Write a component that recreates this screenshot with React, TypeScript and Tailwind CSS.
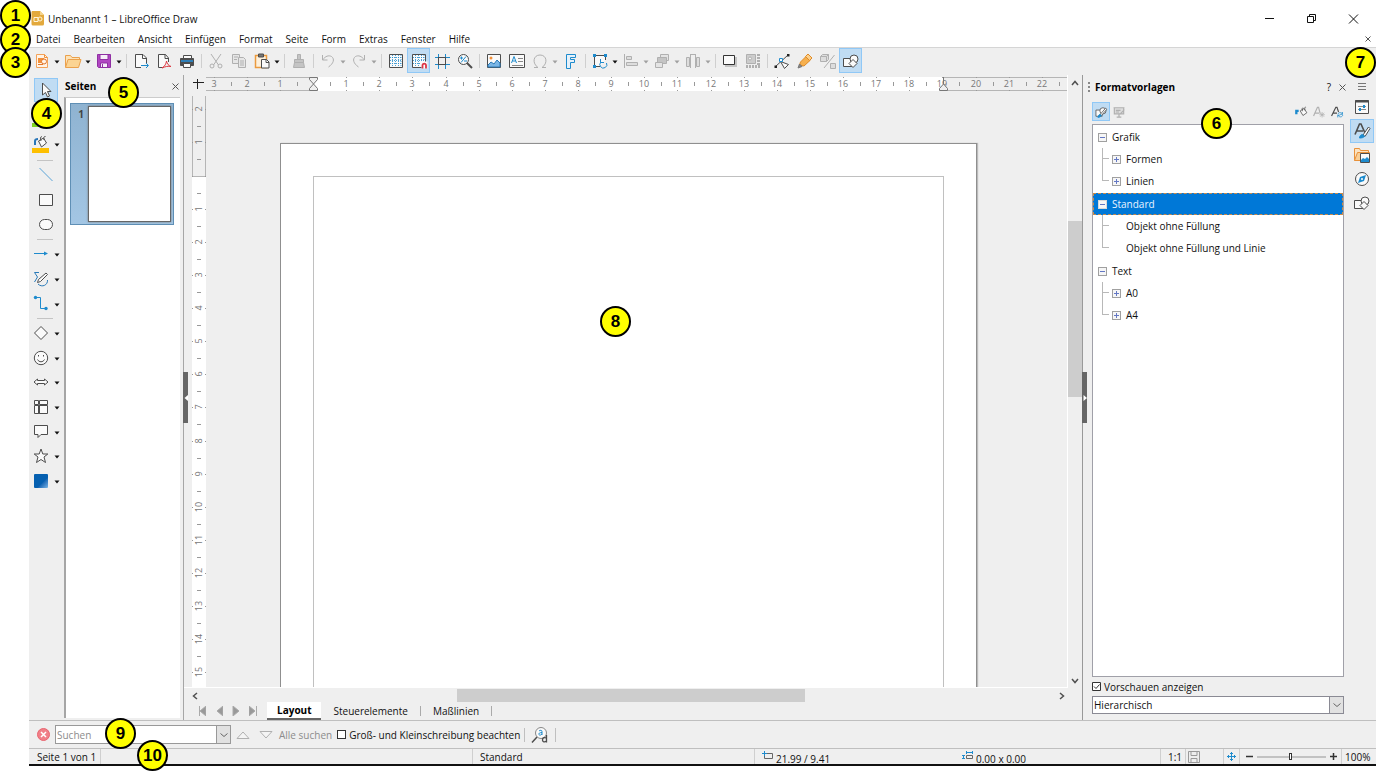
import React from "react";

type Kids = { children?: React.ReactNode };

const Svg = ({ children, size = 18 }: Kids & { size?: number }) => (
  <svg width={size} height={size} viewBox="0 0 18 18" fill="none" stroke="#4d4d4d" strokeWidth="1" aria-hidden="true" className="shrink-0">
    {children}
  </svg>
);

const G = "#b0b0b0";
const B = "#1e8bcd";
const F = "#fafafa";

const icons: Record<string, React.ReactNode> = {
  newDoc: (
    <>
      <path d="M3.5 2.5h8l3 3v10h-11z" fill="#fff3e6" stroke="#f2a25a" />
      <path d="M11.5 2.5v3h3" stroke="#f2903a" />
      <path d="M5 6h6v5H5z" fill="#f2903a" stroke="none" />
      <circle cx="11" cy="9.5" r="2.5" fill="#fff3e6" stroke="#e2762a" />
      <path d="M5 12.5h5" stroke="#e2762a" />
    </>
  ),
  folder: (
    <>
      <path d="M1.5 15V3.5h5l1.5 2h7.5v3" fill="#fde3b8" stroke="#eba14c" />
      <path d="M1.5 15.5l2.5-8h13l-2.5 8z" fill="#fbd493" stroke="#eba14c" />
    </>
  ),
  save: (
    <>
      <path d="M2.5 2.5h13v13h-12l-1-1z" fill="#b146c2" stroke="#8f2fa3" />
      <path d="M5 2.5h8v5H5z" fill="#f7eef9" stroke="#8f2fa3" />
      <path d="M5.5 11h7v4.5h-7z" fill="#f7eef9" stroke="#8f2fa3" />
      <path d="M7.5 12v3" stroke="#8f2fa3" />
    </>
  ),
  exportDoc: (
    <>
      <path d="M14.5 10V6L11 2.5H3.5v13H9" fill={F} />
      <path d="M14.5 11V6.5h-4v-4" />
      <path d="M9 13.5h7M14 11l2.5 2.5L14 16" stroke={B} />
    </>
  ),
  pdf: (
    <>
      <path d="M8 15.5H3.5v-13h7L13.5 6v4" fill={F} />
      <path d="M10 2.5v4h3.5" />
      <path d="M7 16c3-2 4-4 4.5-7 .5 3 2 4.5 4.5 5.5-3-.5-6 0-9 1.5z" stroke="#dd3b44" />
    </>
  ),
  printer: (
    <>
      <path d="M5.5 6V3.5h8V6" fill={F} />
      <path d="M2.5 6.5h13v7h-13z" fill="#4d4d4d" />
      <path d="M3 8h12v2H3z" fill="#2f7fb8" stroke="none" />
      <path d="M5.5 11.5h7v4h-7z" fill={F} />
    </>
  ),
  cut: (
    <g stroke={G}>
      <path d="M4 2l7.5 11M14 2L6.5 13" />
      <circle cx="5" cy="14" r="2" />
      <circle cx="13" cy="14" r="2" />
    </g>
  ),
  copy: (
    <g stroke={G} fill="#e6e6e6">
      <path d="M2.5 2.5h7v9h-7z" />
      <path d="M8.5 5.5h5l2 2v8h-7z" />
      <path d="M4 5h4M4 7.5h3M10 9h4M10 11h4M10 13h4" />
    </g>
  ),
  paste: (
    <>
      <path d="M2.5 3.5h11v12h-11z" fill="#fdf0dc" stroke="#eb9a3e" strokeWidth="1.5" />
      <path d="M5.5 2h5v3h-5z" fill="#777" />
      <path d="M8.5 7.5h5l2.5 2.5v6H8.5z" fill={F} />
      <path d="M13 7.5v3h3" />
    </>
  ),
  brush: (
    <g stroke={G} fill="#c4c4c4">
      <path d="M7.5 2.5h3v5h-3zM4.5 7.5h9v3h-9zM4.5 10.5l-1 5h11l-1-5z" />
    </g>
  ),
  undo: (
    <g stroke={G}>
      <path d="M3.5 3v5h5M3.5 8c3-4 6-5 9-3.5 3.5 2.5 2 7-3 10.5" />
    </g>
  ),
  redo: (
    <g stroke={G}>
      <path d="M14.5 3v5h-5M14.5 8c-3-4-6-5-9-3.5-3.5 2.5-2 7 3 10.5" />
    </g>
  ),
  grid: (
    <>
      <path d="M2.5 2.5h13v13h-13z" fill={F} />
      <path d="M5.5 3v12M8.5 3v12M11.5 3v12M14 3v12M3 5.5h12M3 8.5h12M3 11.5h12" stroke={B} strokeDasharray="1 1" opacity=".8" />
    </>
  ),
  gridSnap: (
    <>
      <path d="M2.5 2.5h13v13h-13z" fill={F} />
      <path d="M5.5 3v12M8.5 3v12M11.5 3v6M14 3v6M3 5.5h12M3 8.5h12M3 11.5h8" stroke={B} strokeDasharray="1 1" opacity=".8" />
      <path d="M11.5 9.5h6v7h-6z" fill={F} stroke="none" />
      <path d="M12.5 16.5v-3.5a1.8 1.8 0 013.5 0v3.5" stroke="#dc3545" strokeWidth="1.8" />
    </>
  ),
  helplines: (
    <>
      <path d="M2 5.5h14M2 12.5h14M5.5 5v8M12.5 5v8" />
      <path d="M5.5 2v3M12.5 2v3M5.5 13v4M12.5 13v4M2 5.5h3M13 5.5h4M2 12.5h3M13 12.5h4" stroke={B} />
    </>
  ),
  zoomPan: (
    <>
      <circle cx="7.5" cy="7.5" r="5" fill={F} />
      <path d="M11 11l5 5" strokeWidth="2" />
      <path d="M4 6h3M5.5 4.5v3M8 9h3M5 10.5l5-6" stroke={B} />
    </>
  ),
  image: (
    <>
      <path d="M2.5 2.5h13v13h-13z" fill={F} />
      <circle cx="6" cy="6" r="1.5" fill="#f2903a" stroke="none" />
      <path d="M3 15v-2l3-3 3 2 3-4 3 3v4z" fill="#7ab6e6" stroke="#2a7ab8" />
    </>
  ),
  textbox: (
    <>
      <path d="M1.5 2.5h15v13h-15z" fill={F} />
      <path d="M3.5 11L6 4.5 8.5 11M4.5 9h3" stroke={B} />
      <path d="M10 6.5h5M10 9.5h5M4 13.5h11" stroke="#888" />
    </>
  ),
  omega: <path d="M3 15.5h4c-6-4-5-12.5 2-12.5s8 8.5 2 12.5h4" stroke={G} />,
  fontwork: <path d="M4.5 2.5h9v3H8.5v2h4v3h-4v6h-4z" fill="#e6f1fa" stroke={B} />,
  transform: (
    <>
      <path d="M9 14.5H3.5v-11h11V8" fill={F} />
      <path d="M2 2h3v3H2zM13 2h3v3h-3zM2 13h3v3H2z" fill={B} stroke="none" />
      <path d="M10 10a3.5 3.5 0 105.5 1M9.5 7v3.5H13" stroke={B} />
    </>
  ),
  align: (
    <g stroke={G} fill="#ddd">
      <path d="M2.5 2v14M4.5 4.5h5v3h-5zM4.5 10.5h11v3h-11z" />
    </g>
  ),
  arrange: (
    <g stroke={G} fill="#e4e4e4">
      <path d="M7.5 2.5h8v6h-8z" />
      <path d="M4.5 5.5h9v6h-9z" fill="#c4c4c4" />
      <path d="M2.5 10.5h7v5h-7z" />
    </g>
  ),
  distribute: (
    <g stroke={G} fill="#ddd">
      <path d="M2.5 5.5h3v9h-3zM12.5 5.5h3v9h-3zM6.5 2.5h5M6.5 2v14M11.5 2v14" />
    </g>
  ),
  shadow: (
    <>
      <path d="M4 5h12v10H4z" fill="#c4c4c4" stroke="none" />
      <path d="M2.5 3.5h11v9h-11z" fill={F} stroke="#333" />
    </>
  ),
  crop: (
    <g stroke={G}>
      <path d="M2.5 2.5h9v9h-9z" fill="#ccc" />
      <circle cx="6" cy="6.5" r="1.5" fill="#f4f4f4" />
      <path d="M2 14.5h14M14.5 2v12" strokeDasharray="2 1" strokeWidth="3" />
    </g>
  ),
  points: (
    <>
      <path d="M2 15L15 3M7.5 9.5l8 3-4 4z" fill={F} />
      <path d="M14 2h2.5v2.5H14zM1.5 13.5H4V16H1.5z" fill="#222" stroke="none" />
      <path d="M6.5 6.5h3v3h-3z" fill={F} stroke={B} />
    </>
  ),
  glue: (
    <>
      <path d="M3.5 13l1-3 6-6 4 4-6.5 6z" fill="#f6b04e" stroke="#e08a25" />
      <path d="M9.5 4.5L12 2l4 4-2.5 2.5z" fill="#fbd08c" stroke="#e08a25" />
      <path d="M2 16l1.5-4L6 14.5z" fill="#888" stroke="#777" />
    </>
  ),
  extrude: (
    <g stroke={G} fill="#ddd">
      <path d="M1.5 4.5l2-2h6v5l-2 2h-6zM1.5 4.5h6v5M7.5 4.5l2-2M11.5 11.5h5v5h-5zM15.5 3L5 16" />
    </g>
  ),
  shapes: (
    <g fill={F}>
      <path d="M1.5 6.5h9v8h-9z" />
      <circle cx="12" cy="7" r="4" />
      <path d="M11 7.5l4 4-4 4-4-4z" />
    </g>
  ),
  pointer: <path d="M5.5 2v12l3-2.5 2 4.5 2-1-2-4.5H14z" fill={F} />,
  lineColor: (
    <>
      <path d="M5 11L13 2" stroke={B} />
      <path d="M0 13h17v4H0z" fill="#7fd321" stroke="none" />
    </>
  ),
  fillColor: (
    <>
      <path d="M0 13h17v5H0z" fill="#fdbf00" stroke="none" />
      <path d="M6.5 6l5-3 3 5-5 4z" fill={F} />
      <path d="M9 6c-1-3-.5-5 1-4M12 5c-.5-2 0-4 1.5-3.5" />
      <path d="M3 10V6C3 4.5 4 4 6 4" stroke="#2a76b8" strokeWidth="2" />
    </>
  ),
  line: <path d="M2.5 2l13 13" stroke="#5aa4d8" />,
  rect: <path d="M2.5 3.5h13v11h-13z" fill={F} />,
  ellipse: <rect x="2.5" y="3.5" width="13" height="10" rx="5" fill={F} />,
  arrow: (
    <>
      <path d="M2 8.5h13" stroke={B} />
      <path d="M12 6.5l4 2-4 2z" fill={B} stroke="none" />
    </>
  ),
  curve: (
    <>
      <path d="M7 2.5H2.5l3 4.5-3 5M6 14c4 4 10 1 9.5-4" stroke="#2a7ab8" />
      <path d="M5.5 12.5l1-3L14 3l1.5 1.5-7 7z" fill={F} />
    </>
  ),
  connector: (
    <>
      <path d="M3.5 2.5h5v11h5" stroke={B} />
      <circle cx="3.5" cy="2.5" r="1.7" fill={B} stroke="none" />
      <circle cx="14" cy="13.5" r="1.7" fill={B} stroke="none" />
    </>
  ),
  diamond: <path d="M9 2.5l6.5 6.5L9 15.5 2.5 9z" fill={F} />,
  smiley: (
    <>
      <circle cx="9" cy="9" r="6.7" fill={F} />
      <path d="M5.5 10.5c1.5 3 5.5 3 7 0M6.5 6v1.5M11.5 6v1.5" />
    </>
  ),
  dblArrow: <path d="M2 9l3.5-3v1.5h7V6L16 9l-3.5 3v-1.5h-7V12z" fill={F} />,
  flow: (
    <>
      <path d="M2.5 2.5h4v4h-4zM7.5 2.5h8v4h-8zM2.5 7.5h4v8h-4zM7.5 7.5h8v8h-8z" fill={F} />
      <path d="M7 7v9" strokeWidth="1.5" />
    </>
  ),
  callout: <path d="M2.5 2.5h13v9H9l-3 3v-3H2.5z" fill={F} />,
  star: <path d="M9 2l1.8 5h5L12 10l1.5 5.5L9 12.5l-4.5 3L6 10 2.2 7h5z" fill={F} />,
  findReplace: (
    <>
      <circle cx="10" cy="7" r="5.5" fill={F} stroke="#888" />
      <path d="M6 11l-5 5.5" strokeWidth="1.5" />
      <path d="M8 5c1-1 3-1 3 .5V9M11 6.5c-4 0-4 3-1.5 2.5L11 8" stroke={B} />
      <path d="M15.5 9v7.5M15.5 12c-3-1-4 0-4 2s2 2.5 4 1" strokeWidth="1.3" />
    </>
  ),
  shapeStyle: (
    <>
      <path d="M2.5 6.5h8v8h-8z" fill={F} />
      <circle cx="11.5" cy="7.5" r="4" fill={F} />
      <path d="M8 12l7-8 1.5 1.5-7 8z" fill={F} />
      <path d="M5 16c0-2 1.5-4 3-4l1.5 1.5C9 15 7 16 5 16z" fill={B} stroke={B} />
    </>
  ),
  presStyle: (
    <g stroke={G} fill="#ddd">
      <path d="M2 3.5h14M3 4v7.5h12V4M5 7h6M5 9h4M9 12v3M6 15.5h6M10 12l6-6" strokeWidth="1.5" />
    </g>
  ),
  fillFormat: (
    <>
      <path d="M3 12V7.5h3" stroke={B} strokeWidth="3" />
      <path d="M8 7.5l5-3 3.5 5.5-5 3.5z" fill={F} />
      <path d="M11 8c-1-3-.5-5 1-4M14 7c-.5-3 0-5 1.5-4" />
    </>
  ),
  newStyle: (
    <g stroke={G}>
      <path d="M2 14L7 3h1.5l2 8M4 10.5h5" strokeWidth="1.5" />
      <path d="M13 9v7M9.5 12.5h7M10.5 10l5 5M15.5 10l-5 5" />
    </g>
  ),
  updateStyle: (
    <>
      <path d="M2 14L7.5 3H9l2 6M4 10.5h5" strokeWidth="1.5" />
      <path d="M10 12c1-3 5-3 6 0M16.5 13c-1 3-5 3-6 0M16 9v3h-3M10 16v-3h3" stroke={B} />
    </>
  ),
  properties: (
    <>
      <path d="M2.5 2.5h13v13h-13z" fill={F} />
      <path d="M2 3.5h14" strokeWidth="2" />
      <path d="M5 8.5h8M5 11.5h8" stroke="#888" />
      <path d="M11 7v3M7 10v3" stroke={B} strokeWidth="2" />
    </>
  ),
  styles: (
    <>
      <path d="M2 12.5L6.5 2H8l4 9M4 9h6" strokeWidth="1.6" />
      <path d="M10 13l5.5-8 1.5 1.5-5 8z" fill={F} />
      <path d="M6.5 16c0-2 1.5-3.5 3-3.5l2 1.5c-.5 1.5-2.5 2-5 2z" fill={B} stroke={B} />
    </>
  ),
  gallery: (
    <>
      <path d="M1.5 14.5v-12h5l1 2h8v2" fill="#fbe3c2" stroke="#e8913a" />
      <path d="M1.5 14.5l3-8h12v8z" fill="#f9cf97" stroke="#e8913a" />
      <path d="M7.5 7.5h9v9h-9z" fill={F} />
      <path d="M8 16v-2l2-2 2 1 2-2 2 2v3z" fill={B} stroke="none" />
    </>
  ),
  navigator: (
    <>
      <circle cx="9" cy="9" r="6.5" fill={F} />
      <path d="M13 5l-2 6-6 2 2-6z" fill={B} stroke="none" />
      <circle cx="9" cy="9" r="1" fill="#fff" stroke="none" />
    </>
  ),
};

const Icon = ({ name, size }: { name: string; size?: number }) => <Svg size={size}>{icons[name]}</Svg>;

const Caret = ({ off }: { off?: boolean }) => (
  <svg width="6" height="4" viewBox="0 0 6 4" aria-hidden="true" className="shrink-0">
    <path d="M0.5 0.5h5L3 3.5z" fill={off ? "#a0a0a0" : "#111"} />
  </svg>
);

const Sep = () => <span className="mx-auto h-3.5 w-px bg-[#cfcfcf]" />;

type Tool = { icon?: string; label?: string; menu?: boolean; off?: boolean; on?: boolean };

const toolbar: Tool[] = [
  { icon: "newDoc", label: "Neu", menu: true },
  { icon: "folder", label: "Öffnen", menu: true },
  { icon: "save", label: "Speichern", menu: true },
  {},
  { icon: "exportDoc", label: "Exportieren" },
  { icon: "pdf", label: "Als PDF exportieren" },
  { icon: "printer", label: "Drucken" },
  {},
  { icon: "cut", label: "Ausschneiden" },
  { icon: "copy", label: "Kopieren" },
  { icon: "paste", label: "Einfügen", menu: true },
  {},
  { icon: "brush", label: "Format übertragen" },
  {},
  { icon: "undo", label: "Rückgängig", menu: true, off: true },
  { icon: "redo", label: "Wiederherstellen", menu: true, off: true },
  {},
  { icon: "grid", label: "Raster anzeigen" },
  { icon: "gridSnap", label: "Am Raster fangen", on: true },
  { icon: "helplines", label: "Hilfslinien" },
  { icon: "zoomPan", label: "Zoom" },
  {},
  { icon: "image", label: "Bild" },
  { icon: "textbox", label: "Textfeld" },
  { icon: "omega", label: "Sonderzeichen", menu: true, off: true },
  { icon: "fontwork", label: "Fontwork" },
  {},
  { icon: "transform", label: "Transformationen", menu: true },
  { icon: "align", label: "Ausrichten", menu: true, off: true },
  { icon: "arrange", label: "Anordnen", menu: true, off: true },
  { icon: "distribute", label: "Verteilen", menu: true, off: true },
  {},
  { icon: "shadow", label: "Schatten" },
  { icon: "crop", label: "Zuschneiden" },
  {},
  { icon: "points", label: "Punkte" },
  { icon: "glue", label: "Klebepunkte" },
  { icon: "extrude", label: "Extrusion" },
  { icon: "shapes", label: "Zeichenfunktionen", on: true },
];

const Badge = ({ n, place }: { n: number; place: string }) => (
  <span
    className={
      "absolute z-20 flex size-[31px] items-center justify-center rounded-full border-2 border-black bg-[#ffff00] font-['Liberation_Sans',sans-serif] text-[17px] leading-none font-bold text-black " +
      place
    }
  >
    {n}
  </span>
);

const CM = 33.13;

const HRuler = () => (
  <svg width="861" height="15" className="block text-[9px]" fill="#777">
    <rect x="0" y="0" width="861" height="14" fill="#efefef" />
    <path d="M0 0.5H861M0 13.5H861" stroke="#b5b5b5" />
    <rect x="107" y="0" width="630" height="14" fill="#fff" />
    {Array.from({ length: 26 }, (_, i) => i - 3).map((n) => {
      const x = Math.round(107 + n * CM);
      return (
        <g key={n}>
          {n !== 0 && (
            <text x={x} y="10" textAnchor="middle">
              {Math.abs(n)}
            </text>
          )}
          <path d={`M${x + 17}.5 5v4M${x}.5 0v1M${x}.5 13v1`} stroke="#999" />
        </g>
      );
    })}
    <path d="M103.5 .5h8v2l-4 4.5-4-4.5zM103.5 13.5h8v-2L107.5 7l-4 4.5z" fill="#efefef" stroke="#777" />
    <path d="M733.5 13.5h8v-2L737.5 7l-4 4.5zM737.5 0v7" fill="#efefef" stroke="#777" />
  </svg>
);

const VRuler = () => (
  <svg width="14" height="592" className="block text-[9px]" fill="#777">
    <rect width="14" height="592" fill="#fff" />
    <path d="M.5 0v80.5h13V0" fill="#efefef" stroke="#b5b5b5" />
    {Array.from({ length: 18 }, (_, i) => i - 2).map((n) => {
      const y = Math.round(79.5 + n * CM);
      return (
        <g key={n}>
          {n !== 0 && (
            <text transform={`translate(10 ${y}) rotate(-90)`} textAnchor="middle">
              {Math.abs(n)}
            </text>
          )}
          <path d={`M5 ${y + 17}.5h4M0 ${y}.5h1M13 ${y}.5h1`} stroke="#999" />
        </g>
      );
    })}
  </svg>
);

const Chevron = ({ d }: { d: string }) => (
  <svg width="8" height="8" viewBox="0 0 8 8" fill="none" stroke="#505050" strokeWidth="1.5" aria-hidden="true">
    <path d={d} />
  </svg>
);

const SmallChevron = () => (
  <svg width="8" height="8" viewBox="0 0 8 8" fill="none" stroke="#666" aria-hidden="true">
    <path d="M.5 2.5L4 5.5l3.5-3" />
  </svg>
);

const SideTool = ({ icon, label, menu, on }: Tool) => (
  <div className={"flex min-h-0 flex-1 items-center " + (menu ? "pl-[3px]" : on ? "pl-[5px]" : "pl-2")}>
    <button aria-label={label} className={"flex items-center justify-center " + (on ? "size-6 border border-[#90c8f6] bg-[#c0dcf3]" : "")}>
      <Icon name={icon!} />
    </button>
    {menu && (
      <span className="ml-1 pt-0.5">
        <Caret />
      </span>
    )}
  </div>
);

const SideSep = () => <span className="my-0.5 ml-2 h-px w-4 shrink-0 bg-[#c4c4c4]" />;

const Box = ({ open, sel }: { open?: boolean; sel?: boolean }) => (
  <svg width="9" height="9" viewBox="0 0 9 9" className="shrink-0" aria-hidden="true">
    <rect x=".5" y=".5" width="8" height="8" fill="#f6f6f6" stroke={sel ? "#d8d8d8" : "#a0a0a0"} />
    <path d={open ? "M2 4.5h5" : "M2 4.5h5M4.5 2v5"} stroke="#6478c4" />
  </svg>
);

const tree = [
  { name: "Grafik", items: ["Formen", "Linien"], leaf: false },
  { name: "Standard", items: ["Objekt ohne Füllung", "Objekt ohne Füllung und Linie"], leaf: true },
  { name: "Text", items: ["A0", "A4"], leaf: false },
];

const VSep = () => <span className="w-px shrink-0 self-stretch bg-[#cfcfcf]" />;

export default function App() {
  return (
    <div className="relative flex h-screen flex-col overflow-hidden bg-white pb-[5px] pl-[29px] font-['Open_Sans','Noto_Sans',sans-serif] text-[10px] leading-4 whitespace-nowrap text-[#111]">
      <header className="flex h-[29px] shrink-0 items-center pt-2 pl-0.5">
        <svg width="14" height="15" viewBox="0 0 14 15" aria-hidden="true">
          <path d="M1 0h8l4 4v9a1.5 1.5 0 01-1.5 1.5H2A1.5 1.5 0 01.5 13V1z" fill="#e3a93c" />
          <path d="M9 0l4 4H9z" fill="#f5d48c" />
          <path d="M3 6.5h4v4H3z" fill="none" stroke="#fff3d6" />
          <circle cx="9" cy="8" r="2" fill="none" stroke="#fff3d6" />
        </svg>
        <h1 className="ml-[3px]">Unbenannt 1 – LibreOffice Draw</h1>
        <div className="mr-[17px] ml-auto flex items-center gap-8">
          <button aria-label="Minimieren">
            <svg width="10" height="10" viewBox="0 0 10 10" stroke="#111">
              <path d="M0 4.5h9" />
            </svg>
          </button>
          <button aria-label="Wiederherstellen">
            <svg width="9" height="10" viewBox="0 0 9 10" fill="none" stroke="#111">
              <path d="M.5 2.5h6v6h-6zM2.5 2V.5h6v6H7" />
            </svg>
          </button>
          <button aria-label="Schließen">
            <svg width="11" height="10" viewBox="0 0 11 10" stroke="#111">
              <path d="M1 .5l9 9M10 .5l-9 9" />
            </svg>
          </button>
        </div>
      </header>

      <nav className="flex h-[19px] shrink-0 items-center gap-[13px] border-b border-[#d5d5d5] pt-0.5 pl-[7px]">
        {["Datei", "Bearbeiten", "Ansicht", "Einfügen", "Format", "Seite", "Form", "Extras", "Fenster", "Hilfe"].map((m) => (
          <button key={m}>{m}</button>
        ))}
        <button aria-label="Dokument schließen" className="mr-[5px] ml-auto flex">
          <svg width="6" height="6" viewBox="0 0 6 6" stroke="#555">
            <path d="M.5 .5l5 5M5.5 .5l-5 5" />
          </svg>
        </button>
      </nav>

      <div className="flex h-[27px] shrink-0 items-center bg-[#efefef] pb-0.5 pl-px">
        {toolbar.map((t, i) =>
          t.icon ? (
            <button
              key={i}
              aria-label={t.label}
              className={"flex h-[25px] shrink-0 items-center justify-center " + (t.on ? "border border-[#90c8f6] bg-[#c0dcf3]" : "") + (t.menu ? " w-[31px]" : " w-[23px]")}
            >
              <span className="flex w-[23px] shrink-0 items-center justify-center">
                <Icon name={t.icon} />
              </span>
              {t.menu && (
                <span className="flex w-2 justify-center pt-0.5">
                  <Caret off={t.off} />
                </span>
              )}
            </button>
          ) : (
            <span key={i} className="flex w-1.5 shrink-0">
              <Sep />
            </span>
          ),
        )}
      </div>

      <main className="flex min-h-0 flex-1 bg-[#efefef]">
        <div className="flex w-[35px] shrink-0 flex-col pt-[3px]">
          <div className="flex h-6 shrink-0">
            <SideTool icon="pointer" label="Auswählen" on />
          </div>
          <div className="mt-1 mb-0.5 flex h-[50px] shrink-0 flex-col">
            <SideTool icon="lineColor" label="Linienfarbe" menu />
            <SideTool icon="fillColor" label="Füllfarbe" menu />
          </div>
          <SideSep />
          <div className="flex h-[74px] shrink-0 flex-col">
            <SideTool icon="line" label="Linie" />
            <SideTool icon="rect" label="Rechteck" />
            <SideTool icon="ellipse" label="Ellipse" />
          </div>
          <SideSep />
          <div className="flex h-[74px] shrink-0 flex-col">
            <SideTool icon="arrow" label="Pfeil" menu />
            <SideTool icon="curve" label="Kurve" menu />
            <SideTool icon="connector" label="Verbinder" menu />
          </div>
          <SideSep />
          <div className="flex h-[172px] shrink-0 flex-col">
            <SideTool icon="diamond" label="Standardformen" menu />
            <SideTool icon="smiley" label="Symbolformen" menu />
            <SideTool icon="dblArrow" label="Blockpfeile" menu />
            <SideTool icon="flow" label="Flussdiagramm" menu />
            <SideTool icon="callout" label="Legenden" menu />
            <SideTool icon="star" label="Sterne" menu />
            <div className="flex min-h-0 flex-1 items-center pl-[5px]">
              <button aria-label="3D-Objekte" className="size-3.5 rounded-[1px] bg-linear-to-br from-[#0560b0] from-60% to-[#7ab6e6]" />
              <span className="ml-1.5 pt-0.5">
                <Caret />
              </span>
            </div>
          </div>
        </div>

        <aside className="relative flex w-[120px] shrink-0 flex-col border-r border-[#a6a6a6] pr-[3px]">
          <div className="flex h-[22px] items-center justify-between pr-px pl-px">
            <h2 className="font-bold text-black">Seiten</h2>
            <button aria-label="Seitenbereich schließen" className="flex">
              <svg width="7" height="7" viewBox="0 0 7 7" stroke="#555">
                <path d="M.5 .5l6 6M6.5 .5l-6 6" />
              </svg>
            </button>
          </div>
          <div className="mb-0.5 flex-1 border-t border-l-2 border-t-[#ccc] border-l-[#a6a6a6] bg-white pt-[5px] pl-1">
            <div className="flex h-[122px] w-[104px] border border-[#5f8fb5] bg-linear-to-b from-[#8fb3d1] to-[#a3c6e4] pt-0.5 pb-0.5">
              <span className="w-[17px] pr-1 text-right font-bold text-[#444]">1</span>
              <span className="w-[83px] border border-[#666] bg-white shadow-[0_0_2px_#777]" />
            </div>
          </div>
          <button aria-label="Seitenbereich einklappen" className="absolute top-[297px] -right-[5px] z-10 flex h-[51px] w-[5px] items-center justify-center bg-[#666]">
            <svg width="4" height="6" viewBox="0 0 4 6">
              <path d="M4 0v6L.5 3z" fill="#fff" />
            </svg>
          </button>
        </aside>

        <section className="flex min-w-0 flex-1 flex-col">
          <div className="flex min-h-0 flex-1">
            <div className="flex min-w-0 flex-1 flex-col border-r border-b border-white pl-2">
              <div className="flex h-[21px] shrink-0 overflow-hidden pt-0.5">
                <svg width="14" height="14" viewBox="0 0 14 14" fill="none" stroke="#222" className="shrink-0">
                  <path d="M1 5.5h11M5.5 2v10" />
                </svg>
                <HRuler />
              </div>
              <div className="flex min-h-0 flex-1">
                <div className="w-3.5 shrink-0 overflow-hidden">
                  <VRuler />
                </div>
                <div className="relative min-w-0 flex-1 overflow-hidden pt-[47px] pl-[74px]">
                  <div className="h-[990px] w-[697px] border border-[#8f8f8f] bg-white p-8 shadow-[1px_0_1px_#bbb]">
                    <div className="h-full border border-[#c0c0c0]" />
                  </div>
                  <Badge n={8} place="top-[210px] left-[394px]" />
                </div>
              </div>
            </div>
            <div className="flex w-[14px] shrink-0 flex-col items-center">
              <button aria-label="Nach oben" className="flex h-4 items-center">
                <Chevron d="M1 6l3-3.5L7 6" />
              </button>
              <div className="flex w-full flex-1 flex-col">
                <span className="grow-[130]" />
                <span className="grow-[176] bg-[#cdcdcd]" />
                <span className="grow-[277]" />
              </div>
              <button aria-label="Nach unten" className="flex h-3.5 items-center">
                <Chevron d="M1 2l3 3.5L7 2" />
              </button>
            </div>
          </div>
          <div className="mt-px mr-4 flex h-[13px] shrink-0 items-center pl-[7px]">
            <button aria-label="Nach links">
              <Chevron d="M6 1L2.5 4 6 7" />
            </button>
            <div className="mx-1 flex h-full flex-1">
              <span className="grow-[254]" />
              <span className="grow-[348] bg-[#cdcdcd]" />
              <span className="grow-[249]" />
            </div>
            <button aria-label="Nach rechts">
              <Chevron d="M2 1l3.5 3L2 7" />
            </button>
          </div>
          <div className="flex h-[18px] shrink-0 items-center">
            <div className="ml-3.5 flex items-center gap-[9px]">
              {["M1.5 0v10M8 0v10L2 5z", "M8 0v10L2 5z", "M1 0v10l6-5z", "M0 0v10l6-5zM7.5 0v10"].map((d) => (
                <button key={d} aria-label="Blättern">
                  <svg width="8" height="10" viewBox="0 0 8 10" fill="#999" stroke="#aaa" strokeWidth="1">
                    <path d={d} />
                  </svg>
                </button>
              ))}
            </div>
            <button className="ml-2.5 h-[18px] border-b-2 border-[#666] bg-white px-2.5 font-bold text-black">Layout</button>
            <button className="px-3">Steuerelemente</button>
            <span className="h-2.5 w-px bg-[#aaa]" />
            <button className="px-3">Maßlinien</button>
            <span className="h-2.5 w-px bg-[#aaa]" />
          </div>
        </section>

        <aside className="relative flex w-[294px] shrink-0 border-l border-[#999] pl-[9px]">
          <button aria-label="Seitenleiste einklappen" className="absolute top-[297px] -left-px z-10 flex h-[51px] w-[5px] items-center justify-center bg-[#666]">
            <svg width="4" height="6" viewBox="0 0 4 6">
              <path d="M.5 0v6L4 3z" fill="#fff" />
            </svg>
          </button>
          <div className="relative flex min-w-0 flex-1 flex-col">
            <div className="flex h-6 shrink-0 items-center">
              <span className="-ml-1 h-2.5 border-l-2 border-dotted border-[#888]" />
              <h2 className="ml-[5px] font-bold text-black">Formatvorlagen</h2>
              <button className="mr-2 ml-auto">?</button>
              <button aria-label="Seitenleiste schließen" className="-mr-0.5 flex">
                <svg width="7" height="7" viewBox="0 0 7 7" stroke="#555">
                  <path d="M.5 .5l6 6M6.5 .5l-6 6" />
                </svg>
              </button>
            </div>
            <div className="flex h-[25px] shrink-0 items-center gap-0.5">
              <button aria-label="Zeichnungsvorlagen" className="flex h-[19px] w-[18px] items-center justify-center border border-[#90c8f6] bg-[#c0dcf3]">
                <Icon name="shapeStyle" size={14} />
              </button>
              <button aria-label="Präsentationsvorlagen">
                <Icon name="presStyle" size={14} />
              </button>
              <button aria-label="Gießkannenmodus" className="ml-auto">
                <Icon name="fillFormat" size={14} />
              </button>
              <button aria-label="Neue Vorlage" className="ml-0.5">
                <Icon name="newStyle" size={14} />
              </button>
              <button aria-label="Vorlage aktualisieren" className="ml-0.5">
                <Icon name="updateStyle" size={14} />
              </button>
            </div>
            <ul className="flex min-h-0 flex-1 flex-col gap-px border border-[#a0a0a8] bg-white pt-px">
              {tree.map((g) => (
                <li key={g.name}>
                  <div
                    className={
                      "flex h-[22px] items-center gap-[5px] pl-[5px] " +
                      (g.name === "Standard" ? "bg-[#0078d7] text-[#eaf4ff] outline-1 -outline-offset-1 outline-dashed outline-[#c98a4a]" : "")
                    }
                  >
                    <Box open sel={g.name === "Standard"} />
                    {g.name}
                  </div>
                  <ul>
                    {g.items.map((it, i) => (
                      <li key={it} className="flex h-[22px] items-center pl-[9px]">
                        <span className="flex h-full w-[7px] flex-col">
                          <span className="h-[11px] w-full border-b border-l border-[#b8b8b8]" />
                          {i === 0 && <span className="w-full flex-1 border-l border-[#b8b8b8]" />}
                        </span>
                        <span className="ml-[3px] flex w-3.5 shrink-0">{!g.leaf && <Box />}</span>
                        {it}
                      </li>
                    ))}
                  </ul>
                </li>
              ))}
            </ul>
            <label className="flex h-[19px] shrink-0 items-center gap-[3px]">
              <input type="checkbox" defaultChecked className="peer sr-only" />
              <svg width="9" height="9" viewBox="0 0 9 9" fill="#fff" stroke="#333">
                <path d="M.5 .5h8v8h-8z" />
                <path d="M2 4.5l2 2 3.5-4" fill="none" />
              </svg>
              Vorschauen anzeigen
            </label>
            <div className="relative mb-1.5 flex h-[18px] shrink-0">
              <select aria-label="Ansicht" className="w-full appearance-none border border-[#8a8a94] bg-white pl-px leading-4">
                <option>Hierarchisch</option>
              </select>
              <span className="pointer-events-none absolute inset-y-0 right-0 flex w-[15px] items-center justify-center border border-[#8a8a94] bg-[#e1e1e1]">
                <SmallChevron />
              </span>
            </div>
            <Badge n={6} place="top-[33px] left-[109px]" />
          </div>
          <div className="flex w-[32px] shrink-0 flex-col items-center pt-2 pl-[3px]">
            <button aria-label="Einstellungen" className="flex">
              <svg width="8" height="7" viewBox="0 0 8 7" stroke="#777">
                <path d="M0 .5h8M0 3.5h8M0 6.5h8" />
              </svg>
            </button>
            <div className="mt-[5px] flex flex-col items-center">
              {[
                ["properties", "Eigenschaften"],
                ["styles", "Formatvorlagen"],
                ["gallery", "Galerie"],
                ["navigator", "Navigator"],
                ["shapes", "Formen"],
              ].map(([ic, l]) => (
                <button
                  key={ic}
                  aria-label={l}
                  className={"flex size-6 items-center justify-center " + (ic === "styles" ? "border border-[#90c8f6] bg-[#c0dcf3]" : "")}
                >
                  <Icon name={ic} />
                </button>
              ))}
            </div>
          </div>
        </aside>
      </main>

      <div className="flex h-7 shrink-0 items-center border-t border-[#bfbfbf] bg-[#efefef] pl-2">
        <button aria-label="Suchleiste schließen">
          <svg width="13" height="13" viewBox="0 0 13 13">
            <circle cx="6.5" cy="6.5" r="6" fill="#f07f88" stroke="#e8646f" />
            <path d="M4 4l5 5M9 4l-5 5" stroke="#fff" strokeWidth="1.5" />
          </svg>
        </button>
        <div className="ml-[5px] flex h-[19px] w-[176px] border border-[#999] bg-white">
          <input aria-label="Suchen" placeholder="Suchen" className="min-w-0 flex-1 pl-px outline-none placeholder:text-[#8c8c8c]" />
          <button aria-label="Suchverlauf" className="flex w-3.5 items-center justify-center border-l border-[#999] bg-[#e1e1e1]">
            <SmallChevron />
          </button>
        </div>
        <button aria-label="Vorheriges suchen" className="ml-[5px]">
          <svg width="14" height="8" viewBox="0 0 14 8" fill="#f4f4f4" stroke={G}>
            <path d="M1 7.5h12L7 1z" />
          </svg>
        </button>
        <button aria-label="Nächstes suchen" className="ml-[9px]">
          <svg width="14" height="8" viewBox="0 0 14 8" fill="#f4f4f4" stroke={G}>
            <path d="M1 .5h12L7 7z" />
          </svg>
        </button>
        <button className="ml-1.5 text-[#8c8c8c]">Alle suchen</button>
        <label className="ml-[5px] flex items-center gap-[3px]">
          <input type="checkbox" className="size-[9px] appearance-none border border-[#333] bg-white" />
          Groß- und Kleinschreibung beachten
        </label>
        <span className="ml-1 h-3.5 w-px bg-[#bfbfbf]" />
        <button aria-label="Suchen und Ersetzen" className="mx-1.5">
          <Icon name="findReplace" />
        </button>
        <span className="h-3.5 w-px bg-[#bfbfbf]" />
      </div>

      <footer className="flex h-[18px] shrink-0 items-center overflow-hidden border-t border-b-2 border-t-[#bfbfbf] border-b-[#111] bg-[#efefef]">
        <span className="w-[71px] pt-px pl-2">Seite 1 von 1</span>
        <VSep />
        <span className="w-[371px]" />
        <VSep />
        <span className="w-[281px] pt-px pl-[7px]">Standard</span>
        <VSep />
        <span className="flex min-w-0 flex-1 items-center">
          <span className="flex w-[200px] items-start gap-[3px] pl-[7px]">
            <svg width="11" height="9" viewBox="0 0 11 9" fill="none" stroke="#666" className="mt-1">
              <path d="M5 2.5h5.5v5h-8V5" />
              <path d="M0 2.5h5M2.5 0v5" stroke={B} />
            </svg>
            <span className="pt-1">21.99 / 9.41</span>
          </span>
          <span className="flex items-start gap-[3px] pl-[7px]">
            <svg width="11" height="9" viewBox="0 0 11 9" fill="none" stroke="#666" className="mt-1">
              <path d="M4.5 4.5h6v3h-6z" />
              <path d="M4 1.5h7M4.5 0v3M10.5 0v3M0 4.5h3M0 7.5h3M1.5 4v4" stroke={B} />
            </svg>
            <span className="pt-1">0.00 x 0.00</span>
          </span>
        </span>
        <VSep />
        <span className="w-6 pt-px pl-[7px]">1:1</span>
        <VSep />
        <span className="flex w-[37px] pl-0.5">
          <svg width="12" height="12" viewBox="0 0 12 12" fill="#eee" stroke="#999">
            <path d="M.5 .5h11v11H.5zM3 .5h6v4H3zM3 7.5h6v4H3z" />
          </svg>
        </span>
        <VSep />
        <button aria-label="Seite einpassen" className="flex w-[15px] justify-center">
          <svg width="9" height="9" viewBox="0 0 9 9" fill="none" stroke={B}>
            <path d="M4.5 0v9M0 4.5h9M3 2l1.5-1.5L6 2M3 7l1.5 1.5L6 7M2 3L.5 4.5 2 6M7 3l1.5 1.5L7 6" />
          </svg>
        </button>
        <VSep />
        <button aria-label="Verkleinern" className="ml-1.5">
          <svg width="7" height="7" viewBox="0 0 7 7" stroke="#333">
            <path d="M0 3.5h7" strokeWidth="1.5" />
          </svg>
        </button>
        <input
          type="range"
          aria-label="Zoom"
          defaultValue={48}
          className="mx-1 h-2 w-[69px] appearance-none bg-linear-to-b from-transparent from-40% via-[#777] via-50% to-transparent to-60% [&::-webkit-slider-thumb]:h-[7px] [&::-webkit-slider-thumb]:w-[3px] [&::-webkit-slider-thumb]:appearance-none [&::-webkit-slider-thumb]:border [&::-webkit-slider-thumb]:border-[#333] [&::-webkit-slider-thumb]:bg-white"
        />
        <button aria-label="Vergrößern">
          <svg width="7" height="7" viewBox="0 0 7 7" stroke="#333">
            <path d="M0 3.5h7M3.5 0v7" strokeWidth="1.5" />
          </svg>
        </button>
        <span className="ml-1 flex self-stretch">
          <VSep />
        </span>
        <span className="w-[34px] pt-px pl-[3px]">100%</span>
      </footer>

      <Badge n={1} place="top-0 left-0" />
      <Badge n={2} place="top-6 left-0" />
      <Badge n={3} place="top-[47px] left-0" />
      <Badge n={4} place="top-[98px] left-[31px]" />
      <Badge n={5} place="top-[77px] left-[108px]" />
      <Badge n={7} place="top-[47px] right-0" />
      <Badge n={9} place="bottom-[22px] left-[105px]" />
      <Badge n={10} place="bottom-0 left-[137px]" />
    </div>
  );
}
